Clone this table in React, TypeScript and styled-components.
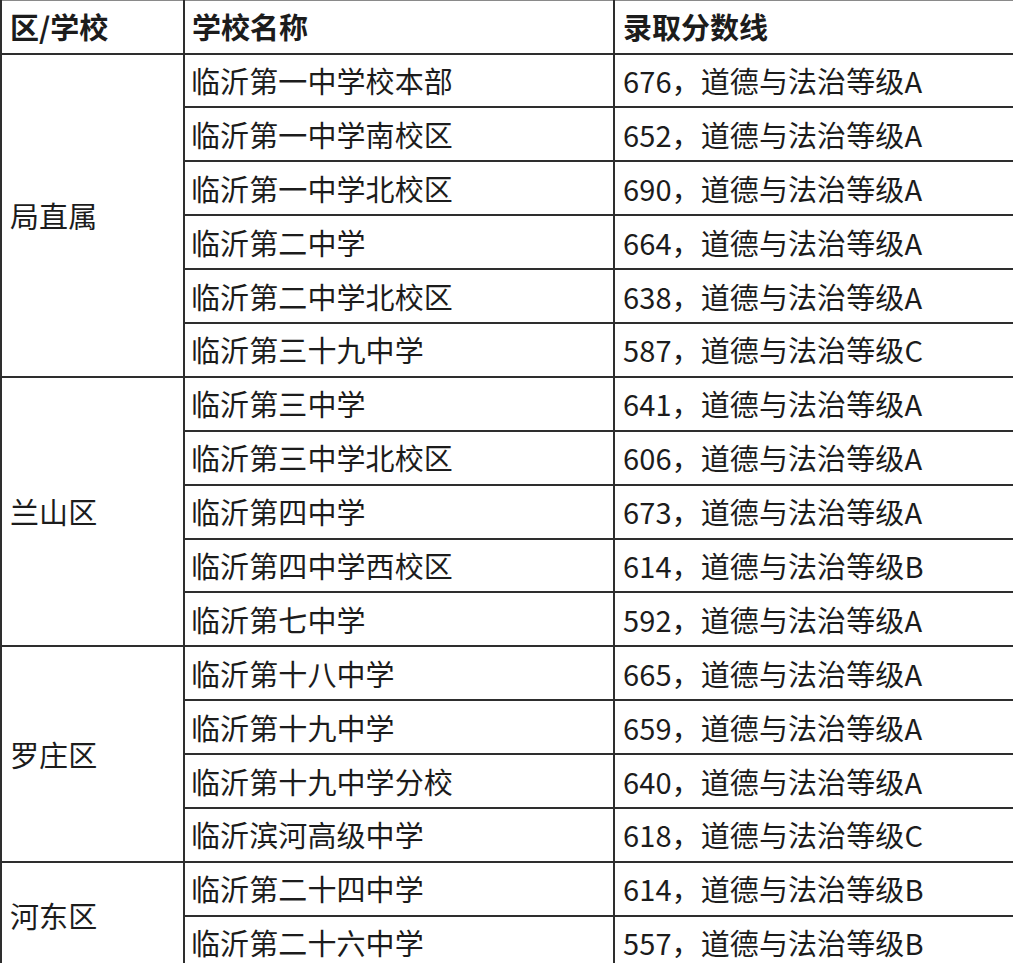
import React from "react";
import styled, { createGlobalStyle } from "styled-components";

const Global = createGlobalStyle`
  html, body { margin: 0; padding: 0; background: #ffffff; }
  body { font-family: "Microsoft YaHei", "Noto Sans CJK SC", "Noto Sans", sans-serif; color: #1c1c1c; overflow: hidden; }
`;

const Table = styled.table`
  border-collapse: collapse;
  table-layout: fixed;
  width: 1030px;
  font-size: 29px;
  line-height: 1;
`;

const Col = styled.col<{ $w?: number }>`
  width: ${(p) => (p.$w ? `${p.$w}px` : "auto")};
`;

const HeadCell = styled.th<{ $pad?: number }>`
  box-sizing: border-box;
  height: 53px;
  padding: 0 0 0 ${(p) => p.$pad ?? 7}px;
  text-align: left;
  font-weight: 700;
  border: 2px solid #2e2e2e;
  border-top: 1px solid #8a8a8a;
  vertical-align: middle;
  white-space: nowrap;
`;

const Cell = styled.td<{ $pad?: number }>`
  box-sizing: border-box;
  height: 53.9px;
  padding: 0 0 0 ${(p) => p.$pad ?? 7}px;
  border: 2px solid #2e2e2e;
  vertical-align: middle;
  white-space: nowrap;
  letter-spacing: 0.1px;
`;

type Row = { name: string; score: string; grade: string };
type Group = { district: string; rows: Row[] };

const data: Group[] = [
  {
    district: "局直属",
    rows: [
      { name: "临沂第一中学校本部", score: "676", grade: "A" },
      { name: "临沂第一中学南校区", score: "652", grade: "A" },
      { name: "临沂第一中学北校区", score: "690", grade: "A" },
      { name: "临沂第二中学", score: "664", grade: "A" },
      { name: "临沂第二中学北校区", score: "638", grade: "A" },
      { name: "临沂第三十九中学", score: "587", grade: "C" },
    ],
  },
  {
    district: "兰山区",
    rows: [
      { name: "临沂第三中学", score: "641", grade: "A" },
      { name: "临沂第三中学北校区", score: "606", grade: "A" },
      { name: "临沂第四中学", score: "673", grade: "A" },
      { name: "临沂第四中学西校区", score: "614", grade: "B" },
      { name: "临沂第七中学", score: "592", grade: "A" },
    ],
  },
  {
    district: "罗庄区",
    rows: [
      { name: "临沂第十八中学", score: "665", grade: "A" },
      { name: "临沂第十九中学", score: "659", grade: "A" },
      { name: "临沂第十九中学分校", score: "640", grade: "A" },
      { name: "临沂滨河高级中学", score: "618", grade: "C" },
    ],
  },
  {
    district: "河东区",
    rows: [
      { name: "临沂第二十四中学", score: "614", grade: "B" },
      { name: "临沂第二十六中学", score: "557", grade: "B" },
    ],
  },
];

export default function App() {
  return (
    <>
      <Global />
      <Table>
        <colgroup>
          <Col $w={183} />
          <Col $w={430} />
          <Col />
        </colgroup>
        <thead>
          <tr>
            <HeadCell $pad={8}>区/学校</HeadCell>
            <HeadCell $pad={7}>学校名称</HeadCell>
            <HeadCell $pad={8}>录取分数线</HeadCell>
          </tr>
        </thead>
        <tbody>
          {data.map((g) =>
            g.rows.map((r, i) => (
              <tr key={g.district + r.name}>
                {i === 0 && (
                  <Cell rowSpan={g.rows.length} $pad={8}>
                    {g.district}
                  </Cell>
                )}
                <Cell $pad={6}>{r.name}</Cell>
                <Cell $pad={8}>
                  {r.score}，道德与法治等级{r.grade}
                </Cell>
              </tr>
            ))
          )}
        </tbody>
      </Table>
    </>
  );
}
